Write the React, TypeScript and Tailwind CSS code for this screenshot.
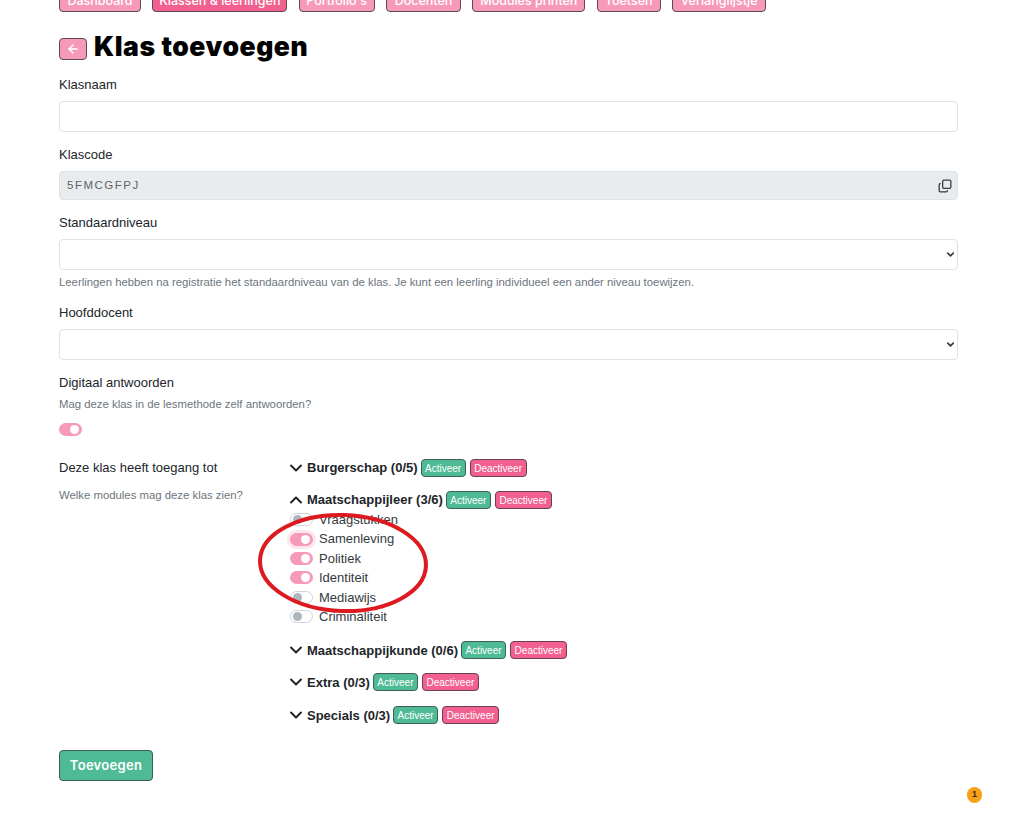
import { ArrowLeft, ChevronDown, ChevronUp, Copy } from "lucide-react";

const navItems = [
  { label: "Dashboard", width: "w-[82px]" },
  { label: "Klassen & leerlingen", width: "w-[135px]", active: true },
  { label: "Portfolio's", width: "w-[76px]" },
  { label: "Docenten", width: "w-[75px]" },
  { label: "Modules printen", width: "w-[113px]" },
  { label: "Toetsen", width: "w-[64px]" },
  { label: "Verlanglijstje", width: "w-[94px]" },
];

const modules = ["Vraagstukken", "Samenleving", "Politiek", "Identiteit", "Mediawijs", "Criminaliteit"];
const enabled = ["Samenleving", "Politiek", "Identiteit"];

function Toggle({ on, focus }: { on: boolean; focus?: boolean }) {
  return (
    <span
      className={`flex h-[13px] w-[23px] shrink-0 items-center rounded-full border px-[2px] ${
        on ? "justify-end border-[#f799b8] bg-[#f799b8]" : "justify-start border-[#ced4da] bg-white"
      } ${focus ? "shadow-[0_0_0_3px_#fde6ee]" : ""}`}
    >
      <span className={`h-[9px] w-[9px] rounded-full ${on ? "bg-white" : "bg-[#adb5bd]"}`} />
    </span>
  );
}

function Group({ name, count, open, gap }: { name: string; count: string; open?: boolean; gap: string }) {
  const Chevron = open ? ChevronUp : ChevronDown;
  return (
    <div className={`flex h-[20px] items-center ${gap}`}>
      <Chevron size={20} strokeWidth={2.4} className="-ml-[4px] mr-[1px] shrink-0 text-[#212529]" />
      <span className="text-[13px] font-bold text-[#212529]">{name} ({count})</span>
      <span className="ml-[3px] flex h-[18px] w-[45px] items-center justify-center rounded-[4px] border border-[#3f5f55] bg-[#4fbb96] text-[10px] text-white">
        Activeer
      </span>
      <span className="ml-[4px] flex h-[18px] w-[57px] items-center justify-center rounded-[4px] border border-[#6b3f50] bg-[#f1608f] text-[10px] text-white">
        Deactiveer
      </span>
    </div>
  );
}

function SelectBox() {
  return (
    <div className="flex h-[31px] items-center justify-end rounded-[4px] border border-[#dee2e6] bg-white pr-[1px]">
      <ChevronDown size={11} strokeWidth={3.5} className="text-[#343a40]" />
    </div>
  );
}

export default function App() {
  return (
    <div className="h-[829px] overflow-hidden bg-white px-[59px] font-['Liberation_Sans',Arial,sans-serif] text-[13px] text-[#212529]">
      <nav className="-mt-[10px] flex h-[22px] gap-[11.33px]">
        {navItems.map((item) => (
          <span
            key={item.label}
            className={`flex h-[22px] items-center justify-center rounded-[4px] border border-[#5f4a52] font-['Inter',sans-serif] text-[12.5px] font-medium text-white ${item.width} ${
              item.active ? "bg-[#f1608f]" : "bg-[#f799b8]"
            }`}
          >
            {item.label}
          </span>
        ))}
      </nav>

      <div className="mt-[26px] flex h-[22px] items-center">
        <button className="flex h-[22px] w-[28px] items-center justify-center rounded-[4px] border border-[#5f4a52] bg-[#f799b8] text-white">
          <ArrowLeft size={14} strokeWidth={2.5} />
        </button>
        <h1 className="mb-[4px] ml-[7px] font-['Inter',sans-serif] text-[26.5px] font-black tracking-[0.55px] text-black">
          Klas toevoegen
        </h1>
      </div>

      <div className="w-[899px]">
        <label className="mt-[15px] block h-[20px] leading-[20px]">Klasnaam</label>
        <div className="mt-[6px] h-[31px] rounded-[4px] border border-[#dee2e6] bg-white" />

        <label className="mt-[13px] block h-[20px] leading-[20px]">Klascode</label>
        <div className="mt-[6px] flex h-[29px] items-center justify-between rounded-[4px] border border-[#dee2e6] bg-[#e9ecef] pl-[7px] pr-[5px]">
          <span className="text-[11.5px] tracking-[1.5px] text-[#5c636a]">5FMCGFPJ</span>
          <Copy size={14} strokeWidth={2.2} className="-scale-y-100 text-[#343a40]" />
        </div>

        <label className="mt-[13px] block h-[20px] leading-[20px]">Standaardniveau</label>
        <div className="mt-[6px]">
          <SelectBox />
        </div>
        <p className="mt-[5px] h-[14px] text-[11.35px] leading-[14px] text-[#6c757d]">
          Leerlingen hebben na registratie het standaardniveau van de klas. Je kunt een leerling individueel een ander niveau toewijzen.
        </p>

        <label className="mt-[14px] block h-[20px] leading-[20px]">Hoofddocent</label>
        <div className="mt-[6px]">
          <SelectBox />
        </div>

        <label className="mt-[13px] block h-[20px] leading-[20px]">Digitaal antwoorden</label>
        <p className="mt-[4px] h-[14px] text-[11.35px] leading-[14px] text-[#6c757d]">
          Mag deze klas in de lesmethode zelf antwoorden?
        </p>
        <div className="mt-[12px]">
          <Toggle on />
        </div>

        <div className="mt-[21px] flex">
          <div className="w-[231px] shrink-0">
            <div className="h-[20px] leading-[22px]">Deze klas heeft toegang tot</div>
            <p className="mt-[11px] h-[14px] text-[11.35px] leading-[14px] text-[#6c757d]">
              Welke modules mag deze klas zien?
            </p>
          </div>
          <div className="relative flex-1 pt-[1px]">
            <Group name="Burgerschap" count="0/5" gap="mb-[12px]" />
            <Group name="Maatschappijleer" count="3/6" open gap="mb-0" />
            {modules.map((name, i) => (
              <div key={name} className="flex h-[19.4px] items-center">
                <Toggle on={enabled.includes(name)} focus={i === 1} />
                <span className="ml-[6px] text-[#343a40]">{name}</span>
              </div>
            ))}
            <div className="mt-[14px]">
              <Group name="Maatschappijkunde" count="0/6" gap="mb-[12px]" />
              <Group name="Extra" count="0/3" gap="mb-[13px]" />
              <Group name="Specials" count="0/3" gap="mb-0" />
            </div>
            <svg
              className="pointer-events-none absolute left-[-32px] top-[54px]"
              width="172"
              height="104"
              viewBox="0 0 172 104"
              fill="none"
            >
              <ellipse
                cx="85"
                cy="52"
                rx="83"
                ry="48"
                transform="rotate(2 85 52)"
                stroke="#dd1a1f"
                strokeWidth="4"
              />
            </svg>
          </div>
        </div>

        <button className="mt-[25px] flex h-[31px] w-[94px] items-center justify-center rounded-[4px] border border-[#3f5f55] bg-[#4fbb96] font-['Inter',sans-serif] text-[13px] font-semibold tracking-[0.3px] text-white">
          Toevoegen
        </button>
      </div>

      <span className="absolute left-[967px] top-[787px] flex h-[16px] w-[15px] items-center justify-center rounded-full bg-[#f9a01b] text-[9px] font-bold text-[#3a2a10]">
        1
      </span>
    </div>
  );
}
